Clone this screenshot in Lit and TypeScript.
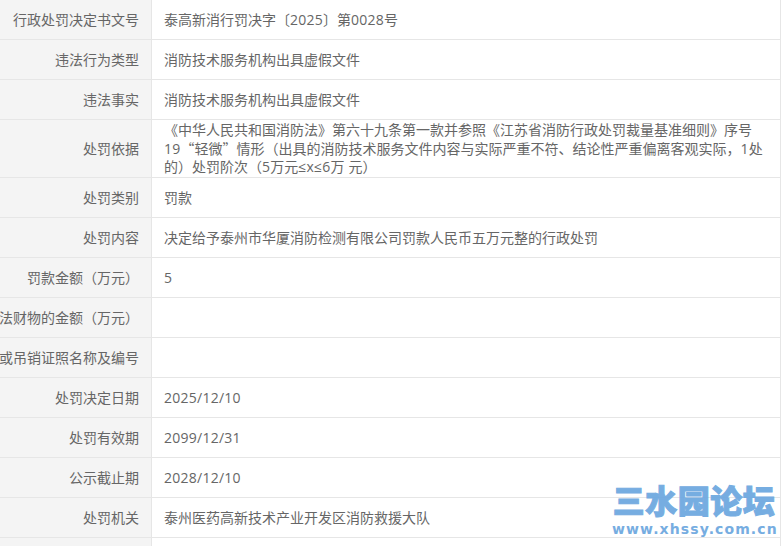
import { LitElement, html, css } from "lit";
import { customElement } from "lit/decorators.js";

const ROWS: [string, string][] = [
  ["行政处罚决定书文号", "泰高新消行罚决字〔2025〕第0028号"],
  ["违法行为类型", "消防技术服务机构出具虚假文件"],
  ["违法事实", "消防技术服务机构出具虚假文件"],
  ["处罚依据", "《中华人民共和国消防法》第六十九条第一款并参照《江苏省消防行政处罚裁量基准细则》序号19“轻微”情形（出具的消防技术服务文件内容与实际严重不符、结论性严重偏离客观实际，1处的）处罚阶次（5万元≤x≤6万 元）"],
  ["处罚类别", "罚款"],
  ["处罚内容", "决定给予泰州市华厦消防检测有限公司罚款人民币五万元整的行政处罚"],
  ["罚款金额（万元）", "5"],
  ["没收违法所得、没收非法财物的金额（万元）", ""],
  ["暂扣或吊销证照名称及编号", ""],
  ["处罚决定日期", "2025/12/10"],
  ["处罚有效期", "2099/12/31"],
  ["公示截止期", "2028/12/10"],
  ["处罚机关", "泰州医药高新技术产业开发区消防救援大队"],
  ["", ""],
];

/* Latin runs are set apart: they need a wider face than the CJK font's own digits. */
const runs = (text: string) =>
  text.split(/([0-9\/≤x ]+)/).map((part, i) =>
    i % 2 ? html`<span class="lat">${part}</span>` : part
  );

@customElement("app-root")
export class AppRoot extends LitElement {
  static styles = css`
    :host {
      display: block;
      position: relative;
      width: 781px;
      height: 546px;
      overflow: hidden;
      background: #fff;
      font-family: "Noto Sans CJK SC", "Liberation Sans", sans-serif;
      font-size: 14px;
      color: #666;
    }
    .table {
      height: 100%;
      border-right: 1px solid #e6e6e6;
    }
    .row {
      display: grid;
      grid-template-columns: 152px 1fr;
      min-height: 39px;
      border-bottom: 1px solid #e6e6e6;
    }
    .label {
      display: flex;
      align-items: center;
      justify-content: flex-end;
      padding: 0 12px 1px 0;
      background: #f4f4f4;
      border-right: 1px solid #e6e6e6;
      white-space: nowrap;
    }
    .value {
      display: flex;
      align-items: center;
      padding: 0 12px 1px;
      line-height: 18.67px;
    }
    .lat {
      font-family: "Open Sans", sans-serif;
      line-height: 1;
      letter-spacing: 0.25px;
    }
    .mark {
      position: absolute;
      left: 612px;
      top: 480px;
      width: 164px;
      color: #6ea8e0;
      text-align: center;
      opacity: 0.94;
    }
    .mark-cn {
      font-size: 32px;
      line-height: 38px;
      font-weight: 900;
      letter-spacing: 0.5px;
      white-space: nowrap;
      -webkit-text-stroke: 1px #6ea8e0;
    }
    .mark-url {
      margin-top: 3px;
      font-family: "DejaVu Sans", sans-serif;
      font-size: 14px;
      line-height: 16px;
      font-weight: 700;
      letter-spacing: 1.1px;
      white-space: nowrap;
    }
  `;

  render() {
    return html`
      <div class="table">
        ${ROWS.map(
          ([k, v]) => html`<div class="row">
            <div class="label">${k}</div>
            <div class="value"><span>${runs(v)}</span></div>
          </div>`
        )}
      </div>
      <div class="mark">
        <div class="mark-cn">三水园论坛</div>
        <div class="mark-url">www.xhssy.com.cn</div>
      </div>
    `;
  }
}
